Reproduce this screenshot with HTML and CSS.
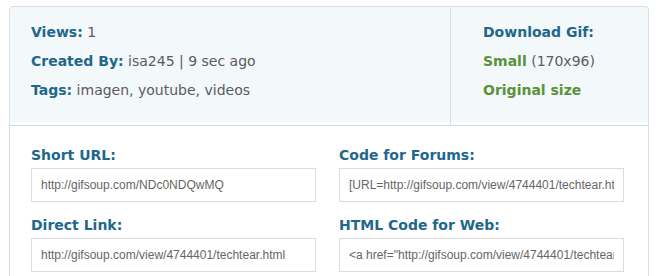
FILE: index.html
```html
<!DOCTYPE html>
<html lang="en">
<head>
  <meta charset="UTF-8">
  <title>GIF details</title>
  <link rel="stylesheet" href="styles.css">
</head>
<body>
  <div class="gif-box">
    <div class="info">
      <div class="info-main">
        <p><span class="key">Views:</span> 1</p>
        <p><span class="key">Created By:</span> isa245 | 9 sec ago</p>
        <p><span class="key">Tags:</span> imagen, youtube, videos</p>
      </div>
      <div class="info-side">
        <p><span class="key">Download Gif:</span></p>
        <p><a class="dl" href="#">Small</a> (170x96)</p>
        <p><a class="dl" href="#">Original size</a></p>
      </div>
    </div>
    <div class="codes">
      <div class="field">
        <label>Short URL:</label>
        <input type="text" value="http://gifsoup.com/NDc0NDQwMQ" readonly>
      </div>
      <div class="field">
        <label>Code for Forums:</label>
        <input type="text" value="[URL=http://gifsoup.com/view/4744401/techtear.html][IMG]http://gifsoup.com/view/4744401/techtear.gif[/IMG][/URL]" readonly>
      </div>
      <div class="field">
        <label>Direct Link:</label>
        <input type="text" value="http://gifsoup.com/view/4744401/techtear.html" readonly>
      </div>
      <div class="field">
        <label>HTML Code for Web:</label>
        <input type="text" value="&lt;a href=&quot;http://gifsoup.com/view/4744401/techtear.html&quot;&gt;" readonly>
      </div>
    </div>
  </div>
</body>
</html>
```

FILE: styles.css
```css
body {
  margin: 0;
  padding: 6px 10px 0 9px;
  background: #fff;
  font-family: "DejaVu Sans", Verdana, sans-serif;
  font-size: 14px;
  color: #5c5c5c;
}

p {
  margin: 0;
}

.gif-box {
  border: 1px solid #d6dde3;
  border-radius: 4px 4px 0 0;
}

.info {
  display: flex;
  background: #f3f8fb;
  border-bottom: 1px solid #d6dbdf;
  box-shadow: inset 0 -3px 0 #fbfdfe;
  border-radius: 4px 4px 0 0;
}

.info p {
  line-height: 29px;
}

.info-main {
  flex: 1;
  padding: 11px 21px 20px;
}

.info-side {
  width: 165px;
  padding: 11px 0 20px 32px;
  border-left: 1px solid #dae0e5;
}

.key {
  font-weight: bold;
  color: #1f678b;
}

.dl {
  font-weight: bold;
  color: #5a9239;
  text-decoration: none;
}

.codes {
  display: grid;
  grid-template-columns: 285px 285px;
  column-gap: 23px;
  row-gap: 14px;
  padding: 20px 0 20px 21px;
}

.field label {
  display: block;
  margin-bottom: 4px;
  font-weight: bold;
  line-height: 18px;
  color: #1f678b;
}

.field input {
  display: block;
  box-sizing: border-box;
  width: 100%;
  height: 34px;
  padding: 0 9px;
  border: 1px solid #dcdcdc;
  font-family: "Liberation Sans", Arial, sans-serif;
  font-size: 12px;
  color: #666;
  background: #fff;
  outline: none;
}
```
